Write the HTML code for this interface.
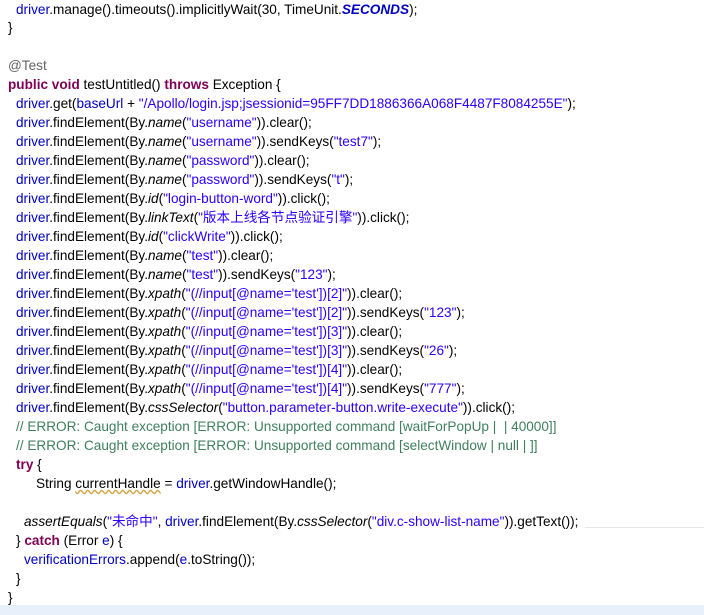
<!DOCTYPE html>
<html><head><meta charset="utf-8"><style>
body{margin:0;width:704px;height:615px;background:#fff;overflow:hidden;position:relative;font-family:"Liberation Sans","Noto Sans CJK SC",sans-serif;font-size:13.6px;color:#000}
.l{position:absolute;white-space:pre;line-height:19px;height:19px}
.d{color:#0000c0}.s{color:#2a00ff}.k{color:#7f0055;font-weight:bold}.c{color:#3f7f5f}.a{color:#646464}
i{font-style:italic}
.band{position:absolute;left:0;top:605px;width:704px;height:10px;background:#e8f0fb}
.u{text-decoration:underline wavy #d4a040}
</style></head><body>
<div class="l" style="left:16px;top:0"><span class="d">driver</span>.manage().timeouts().implicitlyWait(30, TimeUnit.<b class="d"><i>SECONDS</i></b>);</div>
<div class="l" style="left:8px;top:18px">}</div>
<div class="l a" style="left:8px;top:56px">@Test</div>
<div class="l" style="left:8px;top:75px"><span class="k">public void</span> testUntitled() <span class="k">throws</span> Exception {</div>
<div class="l" style="left:16px;top:94px"><span class="d">driver</span>.get(<span class="d">baseUrl</span> + <span class="s">"/Apollo/login.jsp;jsessionid=95FF7DD1886366A068F4487F8084255E"</span>);</div>
<div class="l" style="left:16px;top:113px"><span class="d">driver</span>.findElement(By.<i>name</i>(<span class="s">"username"</span>)).clear();</div>
<div class="l" style="left:16px;top:132px"><span class="d">driver</span>.findElement(By.<i>name</i>(<span class="s">"username"</span>)).sendKeys(<span class="s">"test7"</span>);</div>
<div class="l" style="left:16px;top:151px"><span class="d">driver</span>.findElement(By.<i>name</i>(<span class="s">"password"</span>)).clear();</div>
<div class="l" style="left:16px;top:170px"><span class="d">driver</span>.findElement(By.<i>name</i>(<span class="s">"password"</span>)).sendKeys(<span class="s">"t"</span>);</div>
<div class="l" style="left:16px;top:189px"><span class="d">driver</span>.findElement(By.<i>id</i>(<span class="s">"login-button-word"</span>)).click();</div>
<div class="l" style="left:16px;top:208px"><span class="d">driver</span>.findElement(By.<i>linkText</i>(<span class="s">"版本上线各节点验证引擎"</span>)).click();</div>
<div class="l" style="left:16px;top:227px"><span class="d">driver</span>.findElement(By.<i>id</i>(<span class="s">"clickWrite"</span>)).click();</div>
<div class="l" style="left:16px;top:246px"><span class="d">driver</span>.findElement(By.<i>name</i>(<span class="s">"test"</span>)).clear();</div>
<div class="l" style="left:16px;top:265px"><span class="d">driver</span>.findElement(By.<i>name</i>(<span class="s">"test"</span>)).sendKeys(<span class="s">"123"</span>);</div>
<div class="l" style="left:16px;top:284px"><span class="d">driver</span>.findElement(By.<i>xpath</i>(<span class="s">"(//input[@name='test'])[2]"</span>)).clear();</div>
<div class="l" style="left:16px;top:303px"><span class="d">driver</span>.findElement(By.<i>xpath</i>(<span class="s">"(//input[@name='test'])[2]"</span>)).sendKeys(<span class="s">"123"</span>);</div>
<div class="l" style="left:16px;top:322px"><span class="d">driver</span>.findElement(By.<i>xpath</i>(<span class="s">"(//input[@name='test'])[3]"</span>)).clear();</div>
<div class="l" style="left:16px;top:341px"><span class="d">driver</span>.findElement(By.<i>xpath</i>(<span class="s">"(//input[@name='test'])[3]"</span>)).sendKeys(<span class="s">"26"</span>);</div>
<div class="l" style="left:16px;top:360px"><span class="d">driver</span>.findElement(By.<i>xpath</i>(<span class="s">"(//input[@name='test'])[4]"</span>)).clear();</div>
<div class="l" style="left:16px;top:379px"><span class="d">driver</span>.findElement(By.<i>xpath</i>(<span class="s">"(//input[@name='test'])[4]"</span>)).sendKeys(<span class="s">"777"</span>);</div>
<div class="l" style="left:16px;top:398px"><span class="d">driver</span>.findElement(By.<i>cssSelector</i>(<span class="s">"button.parameter-button.write-execute"</span>)).click();</div>
<div class="l c" style="left:16px;top:417px">// ERROR: Caught exception [ERROR: Unsupported command [waitForPopUp |  | 40000]]</div>
<div class="l c" style="left:16px;top:436px">// ERROR: Caught exception [ERROR: Unsupported command [selectWindow | null | ]]</div>
<div class="l" style="left:16px;top:455px"><span class="k">try</span> {</div>
<div class="l" style="left:36px;top:474px">String <span class="u">currentHandle</span> = <span class="d">driver</span>.getWindowHandle();</div>
<div style="position:absolute;left:585px;top:527px;width:119px;height:1px;background:#e8e8e8"></div>
<div class="l" style="left:24px;top:512px"><i>assertEquals</i>(<span class="s">"未命中"</span>, <span class="d">driver</span>.findElement(By.<i>cssSelector</i>(<span class="s">"div.c-show-list-name"</span>)).getText());</div>
<div class="l" style="left:16px;top:531px">} <span class="k">catch</span> (Error <span class="d">e</span>) {</div>
<div class="l" style="left:24px;top:550px"><span class="d">verificationErrors</span>.append(<span class="d">e</span>.toString());</div>
<div class="l" style="left:16px;top:569px">}</div>
<div class="l" style="left:8px;top:588px">}</div>
<div class="band"></div>
</body></html>
